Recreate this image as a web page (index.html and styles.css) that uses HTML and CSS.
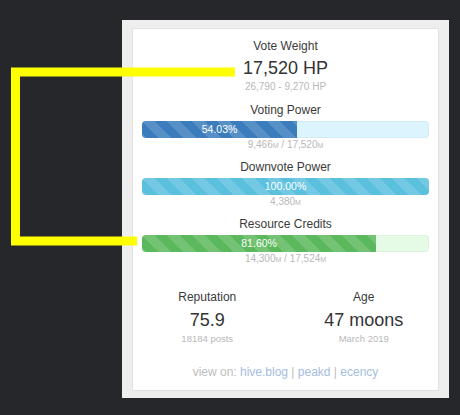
FILE: index.html
```html
<!DOCTYPE html>
<html lang="en">
<head>
    <meta charset="UTF-8">
    <meta name="viewport" content="width=device-width, initial-scale=1.0">
    <title>Account stats</title>

    <link rel="stylesheet" href="styles.css">

</head>
<body>
    <div class="panel">
        <div class="card">
            <div class="weight">
                <div class="label">Vote Weight</div>
                <div class="big">17,520 HP</div>
                <div class="sub">26,790 - 9,270 HP</div>
            </div>

            <div class="meter">
                <div class="label">Voting Power</div>
                <div class="bar bar-vp">
                    <div class="fill" style="width: 54.03%">54.03%</div>
                </div>
                <div class="sub">9,466<small>M</small> / 17,520<small>M</small></div>
            </div>

            <div class="meter">
                <div class="label">Downvote Power</div>
                <div class="bar bar-dv">
                    <div class="fill" style="width: 100%">100.00%</div>
                </div>
                <div class="sub">4,380<small>M</small></div>
            </div>

            <div class="meter">
                <div class="label">Resource Credits</div>
                <div class="bar bar-rc">
                    <div class="fill" style="width: 81.6%">81.60%</div>
                </div>
                <div class="sub">14,300<small>M</small> / 17,524<small>M</small></div>
            </div>

            <div class="stats">
                <div class="stat">
                    <div class="label">Reputation</div>
                    <div class="big">75.9</div>
                    <div class="sub">18184 posts</div>
                </div>
                <div class="stat">
                    <div class="label">Age</div>
                    <div class="big">47 moons</div>
                    <div class="sub">March 2019</div>
                </div>
            </div>

            <div class="links">
                view on: <a href="#">hive.blog</a> | <a href="#">peakd</a> | <a href="#">ecency</a>
            </div>
        </div>
    </div>

    <!-- annotation drawn over the screenshot -->
    <svg class="marker" width="460" height="415" viewBox="0 0 460 415">
        <polyline points="235,72 15.5,72 15.5,241 137,241" fill="none" stroke="#ffff00" stroke-width="9" stroke-linejoin="miter"/>
    </svg>
</body>
</html>
```

FILE: styles.css
```css
body
{
    margin: 0;
    background-color: #26272a;
    font-family: "Liberation Sans", Arial, sans-serif;
    color: #333;
}
.panel
{
    margin: 20px 0 0 122px;
    width: 307px;
    padding: 8px 10px 7px;
    background-color: #eeeeee;
}
.card
{
    background-color: #fff;
    border: 1px solid #e2e2e2;
    padding: 9px 9px 10px;
    text-align: center;
}
.label
{
    font-size: 12px;
    line-height: 16px;
    color: #3a3a3a;
}
.big
{
    font-size: 18px;
    line-height: 24px;
    margin-top: 2px;
    color: #333;
}
.sub
{
    font-size: 10px;
    line-height: 14px;
    color: #b8b8b8;
}
.sub small
{
    font-size: 7px;
}
.meter
{
    margin-top: 6.5px;
}
.weight + .meter
{
    margin-top: 8px;
}
.bar
{
    height: 17px;
    margin-top: 2.5px;
    border-radius: 4px;
    overflow: hidden;
    box-shadow: inset 0 0 0 1px rgba(0, 0, 0, 0.04);
}
.fill
{
    height: 100%;
    color: #fff;
    font-size: 10.5px;
    line-height: 17px;
    background-image: linear-gradient(45deg, rgba(255,255,255,0.15) 25%, transparent 25%, transparent 50%, rgba(255,255,255,0.15) 50%, rgba(255,255,255,0.15) 75%, transparent 75%, transparent);
    background-size: 25px 25px;
}
.bar-vp
{
    background-color: #dcf4fe;
}
.bar-vp .fill
{
    background-color: #3a7cbc;
}
.bar-dv
{
    background-color: #dcf4fe;
}
.bar-dv .fill
{
    background-color: #5bc0de;
}
.bar-rc
{
    background-color: #e6fbe6;
}
.bar-rc .fill
{
    background-color: #5cb85c;
}
.stats
{
    display: grid;
    grid-template-columns: 1fr 1fr;
    margin: 22.5px -13px 0 -13px;
}
.stat .big
{
    margin-top: 3px;
}
.stat .sub
{
    font-size: 9.5px;
}
.links
{
    margin-top: 17.5px;
    font-size: 12px;
    line-height: 16px;
    color: #bdbdbd;
}
.links a
{
    color: #a4bde0;
    text-decoration: none;
}
.marker
{
    position: absolute;
    top: 0;
    left: 0;
    pointer-events: none;
}
```
